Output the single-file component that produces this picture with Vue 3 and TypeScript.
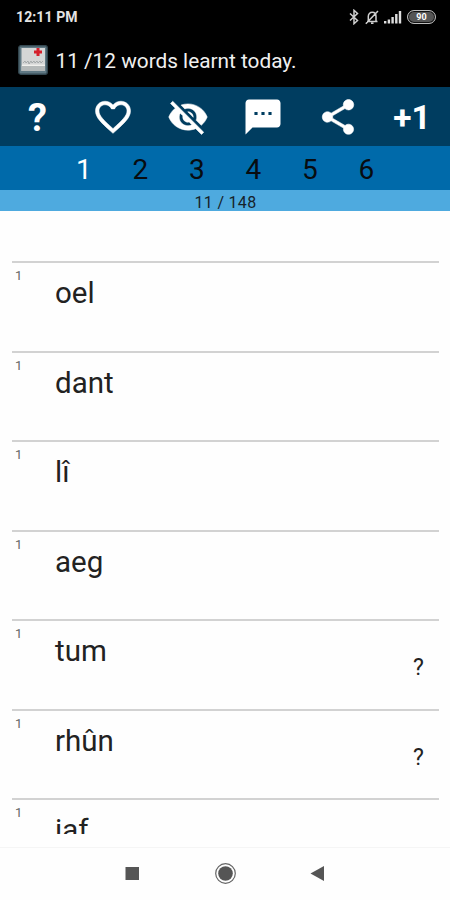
<script setup lang="ts">
interface Word {
  text: string
  level: number
  unknown?: boolean
}

const levels: number[] = [1, 2, 3, 4, 5, 6]
const activeLevel = 1

const words: Word[] = [
  { text: 'oel', level: 1 },
  { text: 'dant', level: 1 },
  { text: 'lî', level: 1 },
  { text: 'aeg', level: 1 },
  { text: 'tum', level: 1, unknown: true },
  { text: 'rhûn', level: 1, unknown: true },
  { text: 'iaf', level: 1 },
]
</script>

<template>
  <div class="screen">
    <div class="status">
      <span class="clock">12:11 PM</span>
      <div class="indicators">
        <svg class="bluetooth" viewBox="0 0 10 16">
          <path d="M1 4.500l7.500 7L5 14.700V1.300l3.500 3.200-7.500 7" />
        </svg>
        <svg class="bell" viewBox="0 0 14 15">
          <path d="M2 11.500h10.500M3.300 11V6.500C3.300 4 5 2.300 7.200 2.300S11 4 11 6.500V11M6 13.300h2.500M.8 13.700L13 1" />
        </svg>
        <svg class="signal" viewBox="0 0 18 14">
          <path d="M0 11h2.400v2.500H0zM3.700 9.500h2.400v4H3.700zM7.400 7h2.400v6.500H7.400zM11.100 4h2.400v9.500h-2.400zM14.800 1h2.400v12.500h-2.400z" />
        </svg>
        <span class="battery">90</span>
      </div>
    </div>

    <header class="title">
      <svg class="logo" viewBox="0 0 30 30">
        <rect x=".8" y=".8" width="28.400" height="28.400" rx="2" fill="#607984" stroke="#344851" stroke-width="1.400" />
        <path d="M3.500 3h23.500v23H3.500z" fill="#d5d6d6" />
        <path d="M3.500 20h23.500v6H3.500z" fill="#b5b9b9" />
        <path d="M4 20.300h23" stroke="#f0f0ed" stroke-width="1.400" />
        <path d="M5 18l2-2 1 2 2-2 1 3 2-3 1 2 2-2 1 2 2-2 1 2 2-2 1 2 2-2" fill="none" stroke="#999e9f" stroke-width=".8" />
        <path d="M20 3v8M16 7h8" stroke="#d51f2b" stroke-width="3" />
      </svg>
      <h1>11 /12 words learnt today.</h1>
    </header>

    <nav class="toolbar">
      <button class="tool glyph help">?</button>
      <button class="tool">
        <svg class="bold" viewBox="0 0 24 24"><path d="M16.500 3c-1.740 0-3.410.81-4.500 2.090C10.910 3.810 9.240 3 7.500 3 4.420 3 2 5.420 2 8.500c0 3.780 3.400 6.860 8.550 11.540L12 21.350l1.450-1.320C18.600 15.360 22 12.280 22 8.500 22 5.420 19.580 3 16.500 3zm-4.400 15.550l-.1.100-.1-.1C7.140 14.240 4 11.390 4 8.500 4 6.500 5.500 5 7.500 5c1.540 0 3.040.99 3.570 2.360h1.870C13.460 5.990 14.960 5 16.500 5c2 0 3.500 1.500 3.500 3.500 0 2.890-3.140 5.740-7.900 10.050z" /></svg>
      </button>
      <button class="tool">
        <svg class="bold" viewBox="0 0 24 24"><path d="M12 7c2.760 0 5 2.240 5 5 0 .65-.13 1.260-.36 1.830l2.920 2.920c1.510-1.260 2.700-2.890 3.430-4.750-1.730-4.390-6-7.500-11-7.500-1.400 0-2.740.25-3.980.7l2.160 2.160C10.740 7.130 11.350 7 12 7zM2 4.270l2.280 2.280.46.46C3.080 8.300 1.780 10.020 1 12c1.730 4.390 6 7.500 11 7.500 1.550 0 3.030-.3 4.380-.84l.42.42L19.730 22 21 20.730 3.270 3 2 4.270zM7.530 9.800l1.550 1.550c-.05.21-.08.43-.08.65 0 1.660 1.340 3 3 3 .22 0 .44-.03.65-.08l1.550 1.550c-.67.33-1.410.53-2.200.53-2.760 0-5-2.240-5-5 0-.79.2-1.530.53-2.200zm4.310-.78l3.150 3.150.02-.16c0-1.660-1.340-3-3-3l-.17.01z" /></svg>
      </button>
      <button class="tool">
        <svg viewBox="0 0 24 24"><path d="M20 2H4c-1.100 0-1.990.9-1.990 2L2 22l4-4h14c1.100 0 2-.9 2-2V4c0-1.100-.9-2-2-2zM8.900 10.900H7.100V9.100h1.800v1.800zm4 0h-1.800V9.100h1.800v1.800zm4 0h-1.800V9.100h1.800v1.800z" /></svg>
      </button>
      <button class="tool">
        <svg class="bold" viewBox="0 0 24 24"><path d="M18 16.080c-.76 0-1.440.3-1.960.77L8.910 12.700c.05-.23.09-.46.09-.7s-.04-.47-.09-.7l7.050-4.110c.54.5 1.250.81 2.040.81 1.660 0 3-1.340 3-3s-1.340-3-3-3-3 1.340-3 3c0 .24.04.47.09.7L8.040 9.810C7.500 9.310 6.790 9 6 9c-1.660 0-3 1.340-3 3s1.340 3 3 3c.79 0 1.500-.31 2.040-.81l7.120 4.160c-.05.21-.08.43-.08.65 0 1.610 1.310 2.920 2.920 2.920 1.610 0 2.920-1.310 2.920-2.920s-1.310-2.920-2.920-2.920z" /></svg>
      </button>
      <button class="tool glyph plus">+1</button>
    </nav>

    <div class="levels">
      <span v-for="n in levels" :key="n" class="level" :class="{ active: n === activeLevel }">{{ n }}</span>
    </div>
    <div class="progress">11 / 148</div>

    <main class="list">
      <div v-for="word in words" :key="word.text" class="row">
        <span class="rank">{{ word.level }}</span>
        <span class="word">{{ word.text }}</span>
        <span v-if="word.unknown" class="mark">?</span>
      </div>
    </main>

    <footer class="system">
      <svg viewBox="0 0 24 24"><path d="M5.500 5h13.500v13H5.500z" /></svg>
      <svg viewBox="0 0 24 24"><circle cx="12.500" cy="11.500" r="9.800" fill="none" stroke="#666" stroke-width="1.200" /><circle cx="12.500" cy="11.500" r="7.300" /></svg>
      <svg viewBox="0 0 24 24"><path d="M4.500 11.500L18 4v15z" /></svg>
    </footer>
  </div>
</template>

<style>
body {
  margin: 0;
  background: #fefefe;
}
</style>

<style scoped>
.screen {
  display: flex;
  flex-direction: column;
  width: 450px;
  height: 900px;
  overflow: hidden;
  background: #fefefe;
  color: #222;
  font-family: Roboto, "Liberation Sans", sans-serif;
}
.status {
  display: flex;
  justify-content: space-between;
  align-items: center;
  box-sizing: border-box;
  height: 34px;
  padding: 0 14px 0 16px;
  background: #000;
  color: #e4e4e4;
}
.clock {
  font-size: 14px;
  font-weight: 700;
  line-height: 34px;
  letter-spacing: .1px;
}
.indicators {
  display: flex;
  align-items: center;
}
.bluetooth {
  width: 10px;
  height: 16px;
  margin-right: 6px;
}
.bell {
  width: 14px;
  height: 15px;
  margin-right: 5px;
}
.bluetooth path,
.bell path {
  fill: none;
  stroke: #cfcfcf;
  stroke-width: 1.5;
}
.signal {
  width: 18px;
  height: 14px;
  margin-right: 5px;
  fill: #dedede;
}
.battery {
  box-sizing: border-box;
  width: 29px;
  height: 14px;
  border: 1.500px solid #bdbdbd;
  border-radius: 7px;
  background: #555;
  box-shadow: inset 0 0 0 1px #111;
  color: #fff;
  font-size: 9px;
  font-weight: 700;
  line-height: 12px;
  text-align: center;
}
.title {
  display: flex;
  align-items: center;
  box-sizing: border-box;
  height: 53px;
  padding: 0 0 2px 18px;
  background: #000;
}
.logo {
  width: 30px;
  height: 30px;
  margin-right: 7.500px;
}
h1 {
  margin: 0;
  padding-top: 2px;
  color: #f0f0f0;
  font-size: 20.800px;
  font-weight: 400;
  line-height: 30px;
  white-space: nowrap;
}
.toolbar {
  display: grid;
  grid-template-columns: repeat(6, 75px);
  height: 59px;
  background: #003d60;
}
.tool {
  display: flex;
  justify-content: center;
  align-items: center;
  padding: 0;
  border: 0;
  background: none;
  color: #fff;
  font-family: inherit;
}
.tool svg {
  width: 42px;
  height: 42px;
  fill: #fff;
}
.tool .bold {
  stroke: #fff;
  stroke-width: .3;
}
.glyph {
  font-size: 34px;
  font-weight: 700;
  line-height: 40px;
}
.help {
  padding-top: 2px;
  font-size: 38px;
}
.plus {
  padding: 2px 1px 0 0;
  font-size: 33.500px;
}
.levels {
  display: grid;
  grid-template-columns: repeat(6, 56.500px);
  justify-content: center;
  height: 44px;
  background: #006aaa;
}
.level {
  color: #080c10;
  font-size: 28px;
  line-height: 48px;
  text-align: center;
}
.level.active {
  color: #fff;
}
.progress {
  height: 21px;
  padding-left: 1px;
  background: #4eaadf;
  color: #16222a;
  font-size: 16px;
  line-height: 25px;
  letter-spacing: .3px;
  text-align: center;
}
.list {
  box-sizing: border-box;
  height: 623px;
  padding: 50px 11px 0 12px;
  overflow: hidden;
}
.row {
  display: grid;
  grid-template-columns: 43px 1fr 26px;
  align-items: start;
  box-sizing: border-box;
  height: 89.550px;
  border-top: 2px solid #d2d2d2;
}
.rank {
  padding: 5px 0 0 3px;
  color: #666;
  font-size: 13px;
  line-height: 16px;
}
.word {
  padding-top: 12px;
  font-size: 29.500px;
  line-height: 36px;
}
.mark {
  padding-top: 33px;
  font-size: 23px;
  line-height: 28px;
}
.system {
  display: flex;
  justify-content: center;
  align-items: center;
  gap: 69px;
  box-sizing: border-box;
  height: 53px;
  margin-top: 13px;
  border-top: 1px solid #f5f5f5;
}
.system svg {
  width: 24px;
  height: 24px;
  fill: #555;
}
</style>
